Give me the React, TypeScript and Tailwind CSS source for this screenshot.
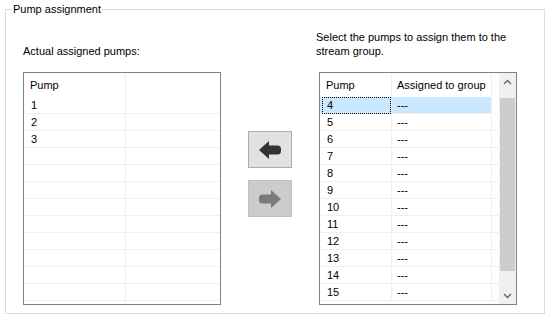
import React from 'react';

const font = { fontFamily: '"Liberation Sans", Arial, sans-serif' };

const leftRows = ['1', '2', '3', '', '', '', '', '', '', '', '', ''];
const rightRows = ['4', '5', '6', '7', '8', '9', '10', '11', '12', '13', '14', '15'];

function ArrowIcon({ dir, color }: { dir: 'left' | 'right'; color: string }) {
  return (
    <svg width="22" height="18" viewBox="0 0 22 18" className={dir === 'right' ? 'scale-x-[-1]' : ''}>
      <path d="M0 9 L10 0 L10 4.5 L18.5 4.5 Q22 4.5 22 8 L22 10 Q22 13.5 18.5 13.5 L10 13.5 L10 18 Z" fill={color} />
    </svg>
  );
}

function Chevron({ up }: { up?: boolean }) {
  return (
    <svg width="9" height="6" viewBox="0 0 9 6">
      <polyline
        points={up ? '1,5 4.5,1.5 8,5' : '1,1 4.5,4.5 8,1'}
        fill="none"
        stroke="#606060"
        strokeWidth="1.3"
      />
    </svg>
  );
}

function AssignedList() {
  return (
    <div className="w-[198px] h-[233px] border border-[#828282] overflow-hidden bg-white">
      <div className="flex h-[24px]">
        <div className="w-[102px] border-r border-[#f0f0f0] pl-[6px] flex items-center">Pump</div>
        <div className="flex-1" />
      </div>
      {leftRows.map((r, i) => (
        <div key={i} className="flex h-[17px] border-b border-[#f0f0f0]">
          <div className="w-[102px] border-r border-[#f0f0f0] pl-[7px] flex items-center">{r}</div>
          <div className="flex-1" />
        </div>
      ))}
      <div className="flex h-[3px]">
        <div className="w-[102px] border-r border-[#f0f0f0]" />
      </div>
    </div>
  );
}

function AvailableList() {
  return (
    <div className="w-[198px] h-[233px] border border-[#828282] overflow-hidden bg-white flex">
      <div className="flex-1">
        <div className="flex h-[24px]">
          <div className="w-[72px] border-r border-[#f0f0f0] pl-[6px] flex items-center">Pump</div>
          <div className="w-[100px] border-r border-[#f0f0f0] pl-[5px] flex items-center whitespace-nowrap">
            Assigned to group
          </div>
          <div className="flex-1" />
        </div>
        {rightRows.map((r, i) => (
          <div key={r} className="flex h-[17px] border-b border-[#f0f0f0]">
            <div
              className={`relative w-[72px] border-r border-[#f0f0f0] pl-[7px] flex items-center ${
                i === 0 ? 'bg-[#cce8ff]' : ''
              }`}
            >
              {i === 0 && <span className="absolute left-[2px] right-0 top-0 bottom-[-1px] border border-dotted border-black" />}
              {r}
            </div>
            <div
              className={`w-[100px] border-r border-[#f0f0f0] pl-[5px] flex items-center ${
                i === 0 ? 'bg-[#cce8ff]' : ''
              }`}
            >
              ---
            </div>
            <div className="flex-1" />
          </div>
        ))}
      </div>
      <div className="w-[17px] bg-[#f0f0f0] flex flex-col items-center">
        <div className="h-[17px] flex items-center justify-center">
          <Chevron up />
        </div>
        <div className="mt-[8px] w-[15px] h-[173px] bg-[#cdcdcd]" />
        <div className="flex-1" />
        <div className="h-[17px] flex items-center justify-center">
          <Chevron />
        </div>
      </div>
    </div>
  );
}

export default function App() {
  return (
    <div className="w-[555px] h-[323px] bg-white pt-[9px] pl-[5px] text-[11px] leading-[14px] text-black" style={font}>
      <div className="relative w-[540px] h-[305px] border border-[#dcdcdc]">
        <span className="absolute left-[6px] top-[-9px] px-[1px] bg-white leading-[16px]">Pump assignment</span>
        <div className="flex pl-[17px]">
          {/* Left: assigned pumps */}
          <div className="flex flex-col">
            <div className="h-[62px] flex items-end pb-[14px]">Actual assigned pumps:</div>
            <AssignedList />
          </div>

          {/* Move buttons */}
          <div className="flex flex-col gap-[12px] pt-[121px] ml-[27px]">
            <button className="w-[44px] h-[37px] bg-[#e1e1e1] border border-[#adadad] flex items-center justify-center">
              <ArrowIcon dir="left" color="#333333" />
            </button>
            <button className="w-[44px] h-[37px] bg-[#cccccc] border border-[#bfbfbf] flex items-center justify-center">
              <ArrowIcon dir="right" color="#7a7a7a" />
            </button>
          </div>

          {/* Right: available pumps */}
          <div className="flex flex-col ml-[24px]">
            <div className="h-[62px] flex items-end pb-[14px] whitespace-nowrap">
              Select the pumps to assign them to the
              <br />
              stream group.
            </div>
            <div className="ml-[3px]">
              <AvailableList />
            </div>
          </div>
        </div>
      </div>
    </div>
  );
}
